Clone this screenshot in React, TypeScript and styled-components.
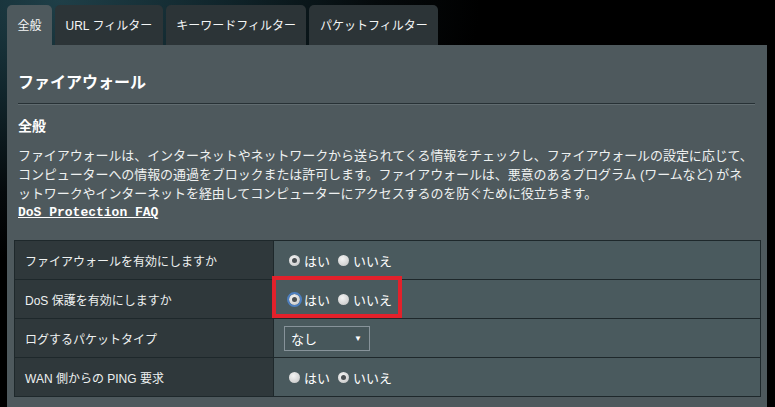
import React, { ReactElement } from 'react';
import styled, { createGlobalStyle } from 'styled-components';

const GlobalStyle = createGlobalStyle`
  html, body {
    margin: 0;
    padding: 0;
    background: #000;
  }
  body {
    font-family: "Liberation Sans", "Noto Sans CJK JP", sans-serif;
    color: #fff;
  }
`;

const Page = styled.div`
  width: 775px;
  height: 407px;
  overflow: hidden;
  padding: 5px 8px 0 7px;
  box-sizing: border-box;
  background: radial-gradient(ellipse 420px 260px at 60px 0px, #1f3f48 0%, #10242a 40%, #050a0c 75%, #000 100%);
`;

const TabBar = styled.div`
  display: flex;
  gap: 3px;
  height: 40px;
`;

const Tab = styled.div<{ $active?: boolean }>`
  display: flex;
  align-items: center;
  padding: 0 10.5px 2px;
  border-radius: 5px 5px 0 0;
  font-size: 12px;
  background: ${(p) => (p.$active ? '#4e595d' : '#2c3437')};
  color: #f4f6f6;
`;

const Panel = styled.div`
  background: #4e595d;
  height: 362px;
  padding: 28px 6px 0 7px;
  box-sizing: border-box;
`;

const Intro = styled.div`
  padding: 0 4px;
`;

const Title = styled.h1`
  margin: 0;
  font-size: 16px;
  line-height: 20px;
  font-weight: bold;
  color: #fff;
`;

const Divider = styled.div`
  margin-top: 10px;
  margin-right: 2px;
  border-top: 1px solid #273135;
  border-bottom: 1px solid #616c70;
`;

const Subtitle = styled.h2`
  margin: 12px 0 0;
  font-size: 14px;
  line-height: 18px;
  font-weight: bold;
  color: #fff;
`;

const Description = styled.p`
  margin: 11px 0 0;
  font-size: 13px;
  line-height: 19px;
  letter-spacing: -0.08px;
  white-space: nowrap;
  color: #eef1f1;
`;

const FaqLink = styled.a`
  display: block;
  font-family: "Liberation Mono", monospace;
  font-size: 13px;
  line-height: 19px;
  letter-spacing: 0;
  font-weight: bold;
  color: #fff;
  text-decoration: underline;
`;

const Table = styled.div`
  margin-top: 18px;
  border: 1px solid #1e282b;
`;

const Row = styled.div`
  display: grid;
  grid-template-columns: 259px 1fr;
  height: 38px;
  & + & {
    border-top: 1px solid #1e282b;
  }
`;

const Label = styled.div`
  display: flex;
  align-items: center;
  padding-left: 10px;
  background: #2f383b;
  border-right: 1px solid #1e282b;
  font-size: 12px;
  color: #eef1f1;
`;

const Value = styled.div`
  position: relative;
  display: flex;
  align-items: center;
  padding-left: 15px;
  background: #4a5a5e;
  font-size: 13px;
  color: #fff;
`;

const Choice = styled.label`
  display: flex;
  align-items: center;
  gap: 4px;
  margin-right: 8px;
`;

const RadioDot = styled.span<{ $checked?: boolean; $focus?: boolean }>`
  position: relative;
  width: 11px;
  height: 11px;
  border-radius: 50%;
  background: radial-gradient(circle at 40% 35%, #f4f4f4 0%, #d6d6d6 60%, #b9b9b9 100%);
  box-sizing: border-box;
  outline: ${(p) => (p.$focus ? '2px solid #4d7fc0' : 'none')};
  outline-offset: 0px;
  &::after {
    content: '';
    display: ${(p) => (p.$checked ? 'block' : 'none')};
    position: absolute;
    left: 3px;
    top: 3px;
    width: 5px;
    height: 5px;
    border-radius: 50%;
    background: #4a4f52;
  }
`;

const Select = styled.div`
  display: flex;
  align-items: center;
  justify-content: space-between;
  width: 86px;
  height: 25px;
  margin-left: -5px;
  margin-top: 1px;
  padding: 0 7px 0 6px;
  box-sizing: border-box;
  border: 1px solid #87939a;
  background: #47575b;
  font-size: 13px;
  color: #fff;
`;

const Arrow = styled.span`
  font-size: 8px;
  color: #fff;
`;

const Highlight = styled.div`
  position: absolute;
  left: -2px;
  top: -4px;
  width: 130px;
  height: 42px;
  box-sizing: border-box;
  border: 4px solid #e3212b;
  pointer-events: none;
`;

interface RadioPairProps {
  yes: boolean;
  focus?: boolean;
}

function RadioPair({ yes, focus }: RadioPairProps): ReactElement {
  return (
    <>
      <Choice>
        <RadioDot $checked={yes} $focus={focus} />
        はい
      </Choice>
      <Choice>
        <RadioDot $checked={!yes} />
        いいえ
      </Choice>
    </>
  );
}

function App(): ReactElement {
  return (
    <Page lang="ja">
      <GlobalStyle />
      <TabBar>
        <Tab $active>全般</Tab>
        <Tab>URL フィルター</Tab>
        <Tab>キーワードフィルター</Tab>
        <Tab>パケットフィルター</Tab>
      </TabBar>
      <Panel>
        <Intro>
          <Title>ファイアウォール</Title>
          <Divider />
          <Subtitle>全般</Subtitle>
          <Description>
            ファイアウォールは、インターネットやネットワークから送られてくる情報をチェックし、ファイアウォールの設定に応じて、
            <br />
            コンピューターへの情報の通過をブロックまたは許可します。ファイアウォールは、悪意のあるプログラム (ワームなど) がネ
            <br />
            ットワークやインターネットを経由してコンピューターにアクセスするのを防ぐために役立ちます。
            <FaqLink>DoS Protection FAQ</FaqLink>
          </Description>
        </Intro>
        <Table>
          <Row>
            <Label>ファイアウォールを有効にしますか</Label>
            <Value>
              <RadioPair yes />
            </Value>
          </Row>
          <Row>
            <Label>DoS 保護を有効にしますか</Label>
            <Value>
              <RadioPair yes focus />
              <Highlight />
            </Value>
          </Row>
          <Row>
            <Label>ログするパケットタイプ</Label>
            <Value>
              <Select>
                なし
                <Arrow>▼</Arrow>
              </Select>
            </Value>
          </Row>
          <Row>
            <Label>WAN 側からの PING 要求</Label>
            <Value>
              <RadioPair yes={false} />
            </Value>
          </Row>
        </Table>
      </Panel>
    </Page>
  );
}

export default App;
